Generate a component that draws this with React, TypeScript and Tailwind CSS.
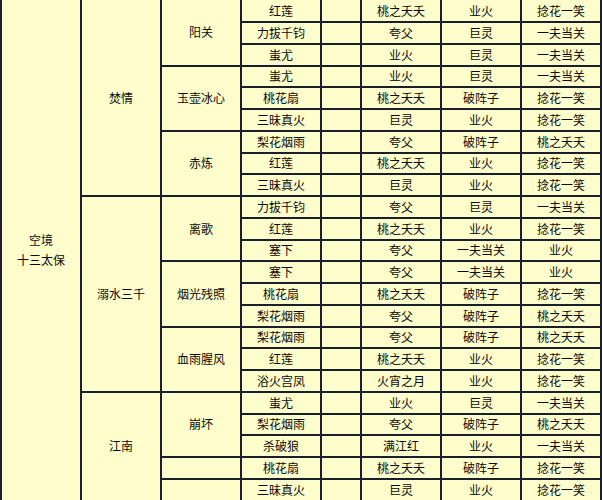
import React from "react"

type Row = [string, string, string, string]

// 组合表：队伍 -> 小组 -> 每行配置
const teams: { team: string; subs: { name: string; rows: Row[] }[] }[] = [
  {
    team: "焚情",
    subs: [
      {
        name: "阳关",
        rows: [
          ["红莲", "桃之夭夭", "业火", "捻花一笑"],
          ["力拔千钧", "夸父", "巨灵", "一夫当关"],
          ["蚩尤", "业火", "巨灵", "一夫当关"],
        ],
      },
      {
        name: "玉壶冰心",
        rows: [
          ["蚩尤", "业火", "巨灵", "一夫当关"],
          ["桃花扇", "桃之夭夭", "破阵子", "捻花一笑"],
          ["三昧真火", "巨灵", "业火", "捻花一笑"],
        ],
      },
      {
        name: "赤炼",
        rows: [
          ["梨花烟雨", "夸父", "破阵子", "桃之夭夭"],
          ["红莲", "桃之夭夭", "业火", "捻花一笑"],
          ["三昧真火", "巨灵", "业火", "捻花一笑"],
        ],
      },
    ],
  },
  {
    team: "溺水三千",
    subs: [
      {
        name: "离歌",
        rows: [
          ["力拔千钧", "夸父", "巨灵", "一夫当关"],
          ["红莲", "桃之夭夭", "业火", "捻花一笑"],
          ["塞下", "夸父", "一夫当关", "业火"],
        ],
      },
      {
        name: "烟光残照",
        rows: [
          ["塞下", "夸父", "一夫当关", "业火"],
          ["桃花扇", "桃之夭夭", "破阵子", "捻花一笑"],
          ["梨花烟雨", "夸父", "破阵子", "桃之夭夭"],
        ],
      },
      {
        name: "血雨腥风",
        rows: [
          ["梨花烟雨", "夸父", "破阵子", "桃之夭夭"],
          ["红莲", "桃之夭夭", "业火", "捻花一笑"],
          ["浴火宫凤", "火宵之月", "业火", "捻花一笑"],
        ],
      },
    ],
  },
  {
    team: "江南",
    subs: [
      {
        name: "崩坏",
        rows: [
          ["蚩尤", "业火", "巨灵", "一夫当关"],
          ["梨花烟雨", "夸父", "破阵子", "桃之夭夭"],
          ["杀破狼", "满江红", "业火", "一夫当关"],
        ],
      },
      { name: "", rows: [["桃花扇", "桃之夭夭", "破阵子", "捻花一笑"]] },
      { name: "", rows: [["三昧真火", "巨灵", "业火", "捻花一笑"]] },
    ],
  },
]

const spans: Record<number, string> = {
  1: "row-span-1",
  3: "row-span-3",
  5: "row-span-5",
  9: "row-span-9",
  23: "row-span-23",
}

const cell = "flex items-center justify-center border-r-2 border-b-2 border-[#18202e] text-center leading-[20px]"

export default function App() {
  const total = teams.reduce((n, t) => n + t.subs.reduce((m, s) => m + s.rows.length, 0), 0)
  const out: React.ReactNode[] = []

  out.push(
    <div key="root" className={`${cell} ${spans[total]}`}>
      空境
      <br />
      十三太保
    </div>
  )

  teams.forEach((t, ti) => {
    const n = t.subs.reduce((m, s) => m + s.rows.length, 0)
    out.push(
      <div key={`t${ti}`} className={`${cell} ${spans[n]}`}>
        {t.team}
      </div>
    )
    t.subs.forEach((s, si) => {
      out.push(
        <div key={`s${ti}-${si}`} className={`${cell} ${spans[s.rows.length]}`}>
          {s.name}
        </div>
      )
      s.rows.forEach((r, ri) => {
        const k = `${ti}-${si}-${ri}`
        out.push(
          <div key={`a${k}`} className={cell}>{r[0]}</div>,
          <div key={`b${k}`} className={cell}></div>,
          <div key={`c${k}`} className={cell}>{r[1]}</div>,
          <div key={`d${k}`} className={cell}>{r[2]}</div>,
          <div key={`e${k}`} className={cell}>{r[3]}</div>
        )
      })
    })
  })

  return (
    <div className="h-[500px] w-[602px] overflow-hidden bg-white">
      <div
        className="grid w-[602px] grid-cols-[80px_80px_80px_80px_40px_80px_80px_80px] grid-rows-[23px_repeat(22,21.75px)] border-l-2 border-[#18202e] bg-[#fefecc] text-[12px] text-[#0a0a0a] font-['Noto_Sans_CJK_SC',sans-serif]"
      >
        {out}
      </div>
    </div>
  )
}
